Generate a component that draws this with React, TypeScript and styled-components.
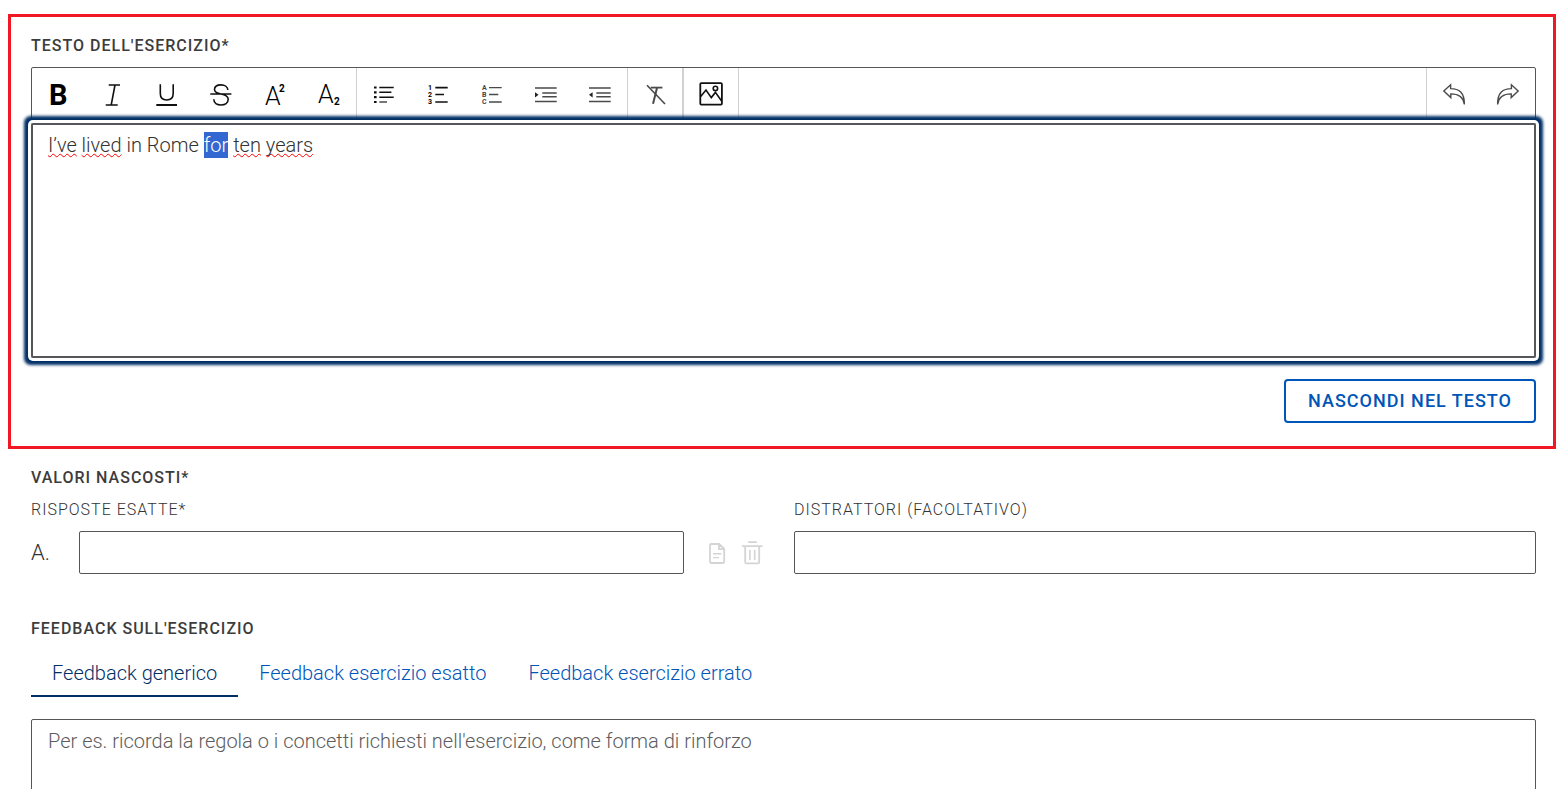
import React from "react";
import styled, { createGlobalStyle } from "styled-components";

const GlobalStyle = createGlobalStyle`
  *, *::before, *::after { box-sizing: border-box; }
  body {
    margin: 0;
    background: #fff;
    color: #333;
    font-family: Roboto, "Liberation Sans", sans-serif;
    font-size: 20px;
    font-weight: 300;
    line-height: 26px;
  }
  button, input, textarea { font: inherit; color: inherit; margin: 0; }
`;

const Page = styled.main`
  padding: 14px 1px 0 8px;
  height: 100vh;
  overflow: hidden;
`;

const Highlight = styled.section`
  border: 3px solid #f01923;
  padding: 19px 17px 23px 20px;
`;

const Section = styled.section<{ $top: number }>`
  padding: ${(p) => p.$top}px 20px 0 23px;
`;

const Heading = styled.h2`
  margin: 0;
  color: #3c3c3c;
  font-size: 16px;
  font-weight: 500;
  line-height: 20px;
  letter-spacing: 1px;
  text-transform: uppercase;
`;

const Toolbar = styled.div`
  display: flex;
  margin-top: 11px;
  border: 1px solid #55565a;
  border-radius: 2px 2px 0 0;
`;

const ToolGroup = styled.div<{ $end?: boolean; $wide?: boolean }>`
  display: flex;
  border-style: solid;
  border-color: #d2d2d2;
  border-width: ${(p) => (p.$end ? "0 0 0 1px" : p.$wide ? "0 2px 0 0" : "0 1px 0 0")};
  margin-left: ${(p) => (p.$end ? "auto" : "0")};
`;

const Tool = styled.button`
  width: 54px;
  height: 54px;
  padding: 0;
  border: 0;
  background: none;
  svg { display: block; }
`;

const Editor = styled.div`
  height: 235px;
  padding: 7px 15px;
  border: 2px solid #55565a;
  border-radius: 2px;
  outline: none;
  box-shadow: 0 0 0 3px #fff, 0 0 3px 7px #002f66;
  position: relative;
  p { margin: 0; }
`;

const Misspelled = styled.span`
  text-decoration: underline wavy #f00 1px;
  text-decoration-skip-ink: none;
`;

const Selected = styled.mark`
  display: inline-block;
  color: #fff;
  background: #3367d1;
`;

const Actions = styled.div`
  display: flex;
  justify-content: flex-end;
  margin-top: 21px;
`;

const OutlineButton = styled.button`
  height: 44px;
  padding: 0 22px;
  border: 2px solid #0055b8;
  border-radius: 4px;
  background: #fff;
  color: #0055b8;
  font-size: 18px;
  font-weight: 500;
  letter-spacing: 1px;
  text-transform: uppercase;
`;

const Columns = styled.div`
  display: grid;
  grid-template-columns: 1fr 1fr;
  gap: 21px;
  margin-top: 12px;
`;

const FieldLabel = styled.label`
  display: block;
  margin-bottom: 11px;
  font-size: 16px;
  line-height: 20px;
  letter-spacing: 1px;
  text-transform: uppercase;
`;

const AnswerRow = styled.div`
  display: flex;
  align-items: center;
  padding-right: 3px;
`;

const Letter = styled.span`
  width: 48px;
  font-size: 22px;
`;

const TextInput = styled.input`
  flex: 1;
  width: 100%;
  min-width: 0;
  height: 43px;
  padding: 0 16px;
  border: 1px solid #55565a;
  border-radius: 2px;
  background: #fff;
`;

const RowActions = styled.div`
  display: flex;
  margin-left: 16px;
`;

const IconButton = styled.button`
  width: 35px;
  height: 43px;
  padding: 0;
  border: 0;
  background: none;
  svg { display: block; }
`;

const Tabs = styled.div`
  display: flex;
  margin-top: 12px;
`;

const Tab = styled.button<{ $active?: boolean }>`
  height: 46px;
  padding: 0 21px;
  border: 0;
  border-bottom: 2px solid ${(p) => (p.$active ? "#002f66" : "transparent")};
  background: none;
  color: ${(p) => (p.$active ? "#002f66" : "#0055b8")};
`;

const TextArea = styled.textarea`
  display: block;
  width: 100%;
  height: 160px;
  margin-top: 22px;
  padding: 8px 16px;
  border: 1px solid #55565a;
  border-radius: 2px;
  resize: none;
  &::placeholder { color: #5c5c5c; opacity: 1; }
`;

type Drawing = { label: string; art: React.ReactNode };

const line = { fill: "none", stroke: "#111", strokeWidth: 1.6 };
const grey = { fill: "none", stroke: "#4a4a4a", strokeWidth: 1.4 };
const small = { fontSize: 7, fontWeight: 700, fontFamily: "Roboto, sans-serif" };

const styleTools: Drawing[] = [
  { label: "Grassetto", art: <text x="17" y="37" fontSize="29" fontWeight="700">B</text> },
  { label: "Corsivo", art: <path {...line} d="M22.7 17H34M19.7 37H31.7M29 17L25.2 37" /> },
  {
    label: "Sottolineato",
    art: (
      <g {...line}>
        <path d="M20.3 16.3V25.5Q20.3 32 26.7 32T33.2 25.5V16.3" />
        <path strokeWidth="2" d="M16.3 37H37" />
      </g>
    ),
  },
  {
    label: "Barrato",
    art: (
      <path
        {...line}
        d="M33.8 22C33.8 19 31 16.9 27 16.9S20.5 18.8 20.5 21.6C20.5 24.2 23 25.3 27 26C31.5 26.8 34.2 28.2 34.2 31.3C34.2 34.9 31 37 27 37S19.8 34.9 19.8 31.3M16.3 26H37.4"
      />
    ),
  },
  {
    label: "Apice",
    art: (
      <>
        <text x="17" y="37" fontSize="25" fontWeight="300">A</text>
        <text x="31" y="24" fontSize="10" fontWeight="700">2</text>
      </>
    ),
  },
  {
    label: "Pedice",
    art: (
      <>
        <text x="16" y="35" fontSize="25" fontWeight="300">A</text>
        <text x="32" y="37" fontSize="10" fontWeight="700">2</text>
      </>
    ),
  },
];

const listTools: Drawing[] = [
  {
    label: "Elenco puntato",
    art: (
      <g {...line}>
        <path strokeWidth="2.2" d="M17 19.5H19.6M17 24.3H19.6M17 29.2H19.6M17 34H19.6" />
        <path d="M22.3 19.5H36.7M22.3 24.3H34.4M22.3 29.2H36.7" />
        <path stroke="#555" d="M22.3 34H30" />
      </g>
    ),
  },
  {
    label: "Elenco numerato",
    art: (
      <>
        <g {...small}>
          <text x="17" y="22">1</text>
          <text x="17" y="29">2</text>
          <text x="17" y="36">3</text>
        </g>
        <path {...line} d="M24.3 19.6H36.7M24.3 26.5H33M24.3 34H36.7" />
      </>
    ),
  },
  {
    label: "Elenco alfabetico",
    art: (
      <>
        <g {...small} fill="#444">
          <text x="17" y="22">A</text>
          <text x="17" y="29">B</text>
          <text x="17" y="36">C</text>
        </g>
        <path {...grey} d="M24 19.6H36.7M24 26.5H33.3M24 34H36.7" />
      </>
    ),
  },
  {
    label: "Aumenta rientro",
    art: (
      <>
        <path {...grey} d="M16 20H37.7M23.3 25H37.7M23.3 28.7H37.7M16 33.5H37.7" />
        <path fill="#222" d="M16 24.2L19.6 26.8L16 29.4Z" />
      </>
    ),
  },
  {
    label: "Riduci rientro",
    art: (
      <>
        <path {...grey} d="M16 20H37.7M23.3 25H37.7M23.3 28.7H37.7M16 33.5H37.7" />
        <path fill="#222" d="M19.6 24.2L16 26.8L19.6 29.4Z" />
      </>
    ),
  },
];

const clearTools: Drawing[] = [
  {
    label: "Rimuovi formattazione",
    art: (
      <g {...grey}>
        <path strokeWidth="1.8" d="M22.7 19.6H34.4" />
        <path strokeWidth="2" d="M29 20L25 35.8" />
        <path strokeWidth="1.6" d="M19 17.3L37 36" />
      </g>
    ),
  },
];

const imageTools: Drawing[] = [
  {
    label: "Inserisci immagine",
    art: (
      <g {...line}>
        <rect x="16.3" y="15.2" width="21.6" height="21.4" rx="1" strokeWidth="1.8" />
        <circle cx="31.4" cy="20.4" r="2.2" />
        <path d="M16.7 28.6L22 22L27.3 29.6L31.4 24.4L37.6 33" />
      </g>
    ),
  },
];

const arrow = "M16.8 23L23.6 16.8V20.6C32 20.6 37.5 24.5 37.4 36.4C36.4 29.4 31.4 25.9 23.8 25.9V29.6Z";

const historyTools: Drawing[] = [
  { label: "Annulla", art: <path {...grey} d={arrow} /> },
  { label: "Ripeti", art: <path {...grey} d={arrow} transform="matrix(-1 0 0 1 54 0)" /> },
];

function ToolButtons({ tools }: { tools: Drawing[] }) {
  return (
    <>
      {tools.map((t) => (
        <Tool key={t.label} type="button" aria-label={t.label}>
          <svg width="54" height="54" viewBox="0 0 54 54" fill="#000" aria-hidden="true">
            {t.art}
          </svg>
        </Tool>
      ))}
    </>
  );
}

export default function App() {
  return (
    <>
      <GlobalStyle />
      <Page>
        <Highlight>
          <Heading id="exercise-text">Testo dell'esercizio*</Heading>
          <Toolbar role="toolbar" aria-label="Formattazione">
            <ToolGroup><ToolButtons tools={styleTools} /></ToolGroup>
            <ToolGroup><ToolButtons tools={listTools} /></ToolGroup>
            <ToolGroup $wide><ToolButtons tools={clearTools} /></ToolGroup>
            <ToolGroup><ToolButtons tools={imageTools} /></ToolGroup>
            <ToolGroup $end><ToolButtons tools={historyTools} /></ToolGroup>
          </Toolbar>
          <Editor
            role="textbox"
            aria-multiline="true"
            aria-labelledby="exercise-text"
            contentEditable
            suppressContentEditableWarning
            spellCheck={false}
          >
            <p>
              <Misspelled>I’ve</Misspelled> <Misspelled>lived</Misspelled> in Rome <Selected>for</Selected>{" "}
              <Misspelled>ten</Misspelled> <Misspelled>years</Misspelled>
            </p>
          </Editor>
          <Actions>
            <OutlineButton type="button">Nascondi nel testo</OutlineButton>
          </Actions>
        </Highlight>

        <Section $top={19}>
          <Heading>Valori nascosti*</Heading>
          <Columns>
            <div>
              <FieldLabel htmlFor="answer-a">Risposte esatte*</FieldLabel>
              <AnswerRow>
                <Letter>A.</Letter>
                <TextInput id="answer-a" type="text" />
                <RowActions>
                  <IconButton type="button" aria-label="Feedback risposta">
                    <svg width="35" height="43" viewBox="0 0 35 43" fill="none" stroke="#d4d4d4" strokeWidth="1.8" strokeLinejoin="round" aria-hidden="true">
                      <path d="M10 14.2Q10 13 11.2 13H19.2L24.2 18V30.8Q24.2 32 23 32H11.2Q10 32 10 30.8ZM19 13V18.2H24.2" />
                      <path strokeWidth="1.4" d="M13 22.8H21.4M13 26.6H19" />
                    </svg>
                  </IconButton>
                  <IconButton type="button" aria-label="Elimina risposta">
                    <svg width="35" height="43" viewBox="0 0 35 43" fill="none" stroke="#d4d4d4" strokeWidth="1.8" aria-hidden="true">
                      <path d="M13.2 11.2H21.8M7 15.2H27.4M10.2 15.2V31Q10.2 32.4 11.6 32.4H22.8Q24.2 32.4 24.2 31V15.2" />
                      <path strokeWidth="1.6" d="M14.9 19V29M19.7 19V29" />
                    </svg>
                  </IconButton>
                </RowActions>
              </AnswerRow>
            </div>
            <div>
              <FieldLabel htmlFor="distractors">Distrattori (facoltativo)</FieldLabel>
              <TextInput id="distractors" type="text" />
            </div>
          </Columns>
        </Section>

        <Section $top={45}>
          <Heading>Feedback sull'esercizio</Heading>
          <Tabs role="tablist">
            <Tab type="button" role="tab" aria-selected="true" $active>Feedback generico</Tab>
            <Tab type="button" role="tab" aria-selected="false">Feedback esercizio esatto</Tab>
            <Tab type="button" role="tab" aria-selected="false">Feedback esercizio errato</Tab>
          </Tabs>
          <TextArea
            aria-label="Feedback generico"
            placeholder="Per es. ricorda la regola o i concetti richiesti nell'esercizio, come forma di rinforzo"
          />
        </Section>
      </Page>
    </>
  );
}
